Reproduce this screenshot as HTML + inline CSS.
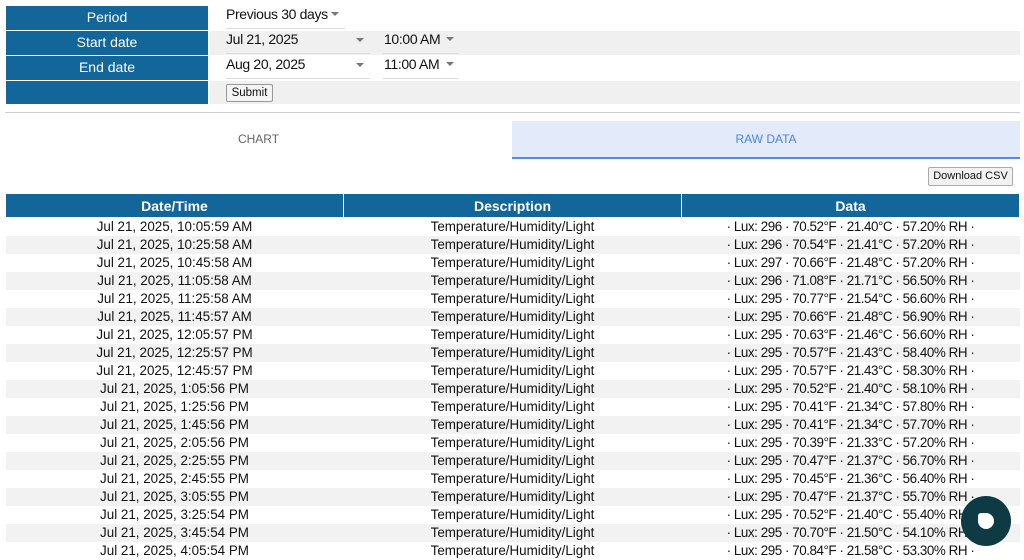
<!DOCTYPE html>
<html><head><style>
body{margin:0;width:1024px;height:559px;overflow:hidden;background:#fff;font-family:"Liberation Sans",Arial,sans-serif;color:#111;position:relative}
.lab{position:absolute;left:6px;width:202px;height:24px;background:#136699;color:#fff;font-size:14px;text-align:center;line-height:23px}
.rc{position:absolute;left:210px;width:810px;height:24px}
.t{position:absolute;font-size:14px;line-height:16px;letter-spacing:-0.35px}
.ul{position:absolute;height:1px;background:#ddd}
.arr{position:absolute;width:0;height:0;border-left:4px solid transparent;border-right:4px solid transparent;border-top:4px solid #777}
table{position:absolute;left:5px;top:193px;width:1015px;border-collapse:collapse;font-size:13.4px}
th{background:#136699;color:#fff;font-weight:bold;height:23px;padding:0;border:1px solid #fff;font-size:14px}
td{height:18px;padding:0;text-align:center;line-height:18px}
td:nth-child(3){letter-spacing:-0.45px}
tr:nth-child(odd) td{background:#f2f2f2}
</style></head><body>
<div class="lab" style="top:6px">Period</div>
<div class="lab" style="top:31px">Start date</div>
<div class="lab" style="top:56px">End date</div>
<div class="lab" style="top:81px;height:23px"></div>
<div class="rc" style="top:31px;background:#f0f0f0"></div>
<div class="rc" style="top:81px;height:23px;background:#f0f0f0"></div>
<div class="t" style="left:226px;top:6px">Previous 30 days</div><div class="arr" style="left:331px;top:12px"></div>
<div class="ul" style="left:226px;top:28px;width:119px"></div>
<div class="t" style="left:226px;top:31px">Jul 21, 2025</div><div class="arr" style="left:356px;top:38px"></div>
<div class="ul" style="left:226px;top:53px;width:144px"></div>
<div class="t" style="left:384px;top:31px">10:00 AM</div><div class="arr" style="left:446px;top:37px"></div>
<div class="ul" style="left:383px;top:53px;width:76px"></div>
<div class="t" style="left:226px;top:56px">Aug 20, 2025</div><div class="arr" style="left:356px;top:63px"></div>
<div class="ul" style="left:226px;top:78px;width:144px"></div>
<div class="t" style="left:384px;top:56px">11:00 AM</div><div class="arr" style="left:446px;top:62px"></div>
<div class="ul" style="left:383px;top:78px;width:76px"></div>
<div style="position:absolute;left:226px;top:84px;width:45px;height:16px;border:1px solid #999;background:#f4f4f4;border-radius:2px;font-size:11.5px;line-height:16px;text-align:center">Submit</div>
<div style="position:absolute;left:5px;top:112px;width:1015px;height:1px;background:#ccc"></div>
<div style="position:absolute;left:5px;top:121px;width:507px;height:37px;font-size:12px;color:#666;text-align:center;line-height:37px">CHART</div>
<div style="position:absolute;left:512px;top:121px;width:508px;height:36px;background:#e3ebfb;border-bottom:2px solid #4a8ef0;font-size:12px;color:#4a85e8;text-align:center;line-height:36px">RAW DATA</div>
<div style="position:absolute;left:928px;top:167px;width:83px;height:17px;border:1px solid #aaa;background:#f2f2f2;border-radius:2px;font-size:11px;line-height:17px;text-align:center">Download CSV</div>
<table>
<tr><th style="width:337px">Date/Time</th><th style="width:337px">Description</th><th>Data</th></tr>
<tr><td>Jul 21, 2025, 10:05:59 AM</td><td>Temperature/Humidity/Light</td><td>· Lux: 296 · 70.52°F · 21.40°C · 57.20% RH ·</td></tr>
<tr><td>Jul 21, 2025, 10:25:58 AM</td><td>Temperature/Humidity/Light</td><td>· Lux: 296 · 70.54°F · 21.41°C · 57.20% RH ·</td></tr>
<tr><td>Jul 21, 2025, 10:45:58 AM</td><td>Temperature/Humidity/Light</td><td>· Lux: 297 · 70.66°F · 21.48°C · 57.20% RH ·</td></tr>
<tr><td>Jul 21, 2025, 11:05:58 AM</td><td>Temperature/Humidity/Light</td><td>· Lux: 296 · 71.08°F · 21.71°C · 56.50% RH ·</td></tr>
<tr><td>Jul 21, 2025, 11:25:58 AM</td><td>Temperature/Humidity/Light</td><td>· Lux: 295 · 70.77°F · 21.54°C · 56.60% RH ·</td></tr>
<tr><td>Jul 21, 2025, 11:45:57 AM</td><td>Temperature/Humidity/Light</td><td>· Lux: 295 · 70.66°F · 21.48°C · 56.90% RH ·</td></tr>
<tr><td>Jul 21, 2025, 12:05:57 PM</td><td>Temperature/Humidity/Light</td><td>· Lux: 295 · 70.63°F · 21.46°C · 56.60% RH ·</td></tr>
<tr><td>Jul 21, 2025, 12:25:57 PM</td><td>Temperature/Humidity/Light</td><td>· Lux: 295 · 70.57°F · 21.43°C · 58.40% RH ·</td></tr>
<tr><td>Jul 21, 2025, 12:45:57 PM</td><td>Temperature/Humidity/Light</td><td>· Lux: 295 · 70.57°F · 21.43°C · 58.30% RH ·</td></tr>
<tr><td>Jul 21, 2025, 1:05:56 PM</td><td>Temperature/Humidity/Light</td><td>· Lux: 295 · 70.52°F · 21.40°C · 58.10% RH ·</td></tr>
<tr><td>Jul 21, 2025, 1:25:56 PM</td><td>Temperature/Humidity/Light</td><td>· Lux: 295 · 70.41°F · 21.34°C · 57.80% RH ·</td></tr>
<tr><td>Jul 21, 2025, 1:45:56 PM</td><td>Temperature/Humidity/Light</td><td>· Lux: 295 · 70.41°F · 21.34°C · 57.70% RH ·</td></tr>
<tr><td>Jul 21, 2025, 2:05:56 PM</td><td>Temperature/Humidity/Light</td><td>· Lux: 295 · 70.39°F · 21.33°C · 57.20% RH ·</td></tr>
<tr><td>Jul 21, 2025, 2:25:55 PM</td><td>Temperature/Humidity/Light</td><td>· Lux: 295 · 70.47°F · 21.37°C · 56.70% RH ·</td></tr>
<tr><td>Jul 21, 2025, 2:45:55 PM</td><td>Temperature/Humidity/Light</td><td>· Lux: 295 · 70.45°F · 21.36°C · 56.40% RH ·</td></tr>
<tr><td>Jul 21, 2025, 3:05:55 PM</td><td>Temperature/Humidity/Light</td><td>· Lux: 295 · 70.47°F · 21.37°C · 55.70% RH ·</td></tr>
<tr><td>Jul 21, 2025, 3:25:54 PM</td><td>Temperature/Humidity/Light</td><td>· Lux: 295 · 70.52°F · 21.40°C · 55.40% RH ·</td></tr>
<tr><td>Jul 21, 2025, 3:45:54 PM</td><td>Temperature/Humidity/Light</td><td>· Lux: 295 · 70.70°F · 21.50°C · 54.10% RH ·</td></tr>
<tr><td>Jul 21, 2025, 4:05:54 PM</td><td>Temperature/Humidity/Light</td><td>· Lux: 295 · 70.84°F · 21.58°C · 53.30% RH ·</td></tr>
</table>
<div style="position:absolute;left:961px;top:496px;width:50px;height:50px;border-radius:50%;background:#0d3a43"></div>
<svg style="position:absolute;left:977px;top:512px" width="18" height="18" viewBox="0 0 18 18"><path d="M9 1a8 8 0 1 1 -8 8v-5a3 3 0 0 1 3-3z" fill="#fff"/></svg>
</body></html>
